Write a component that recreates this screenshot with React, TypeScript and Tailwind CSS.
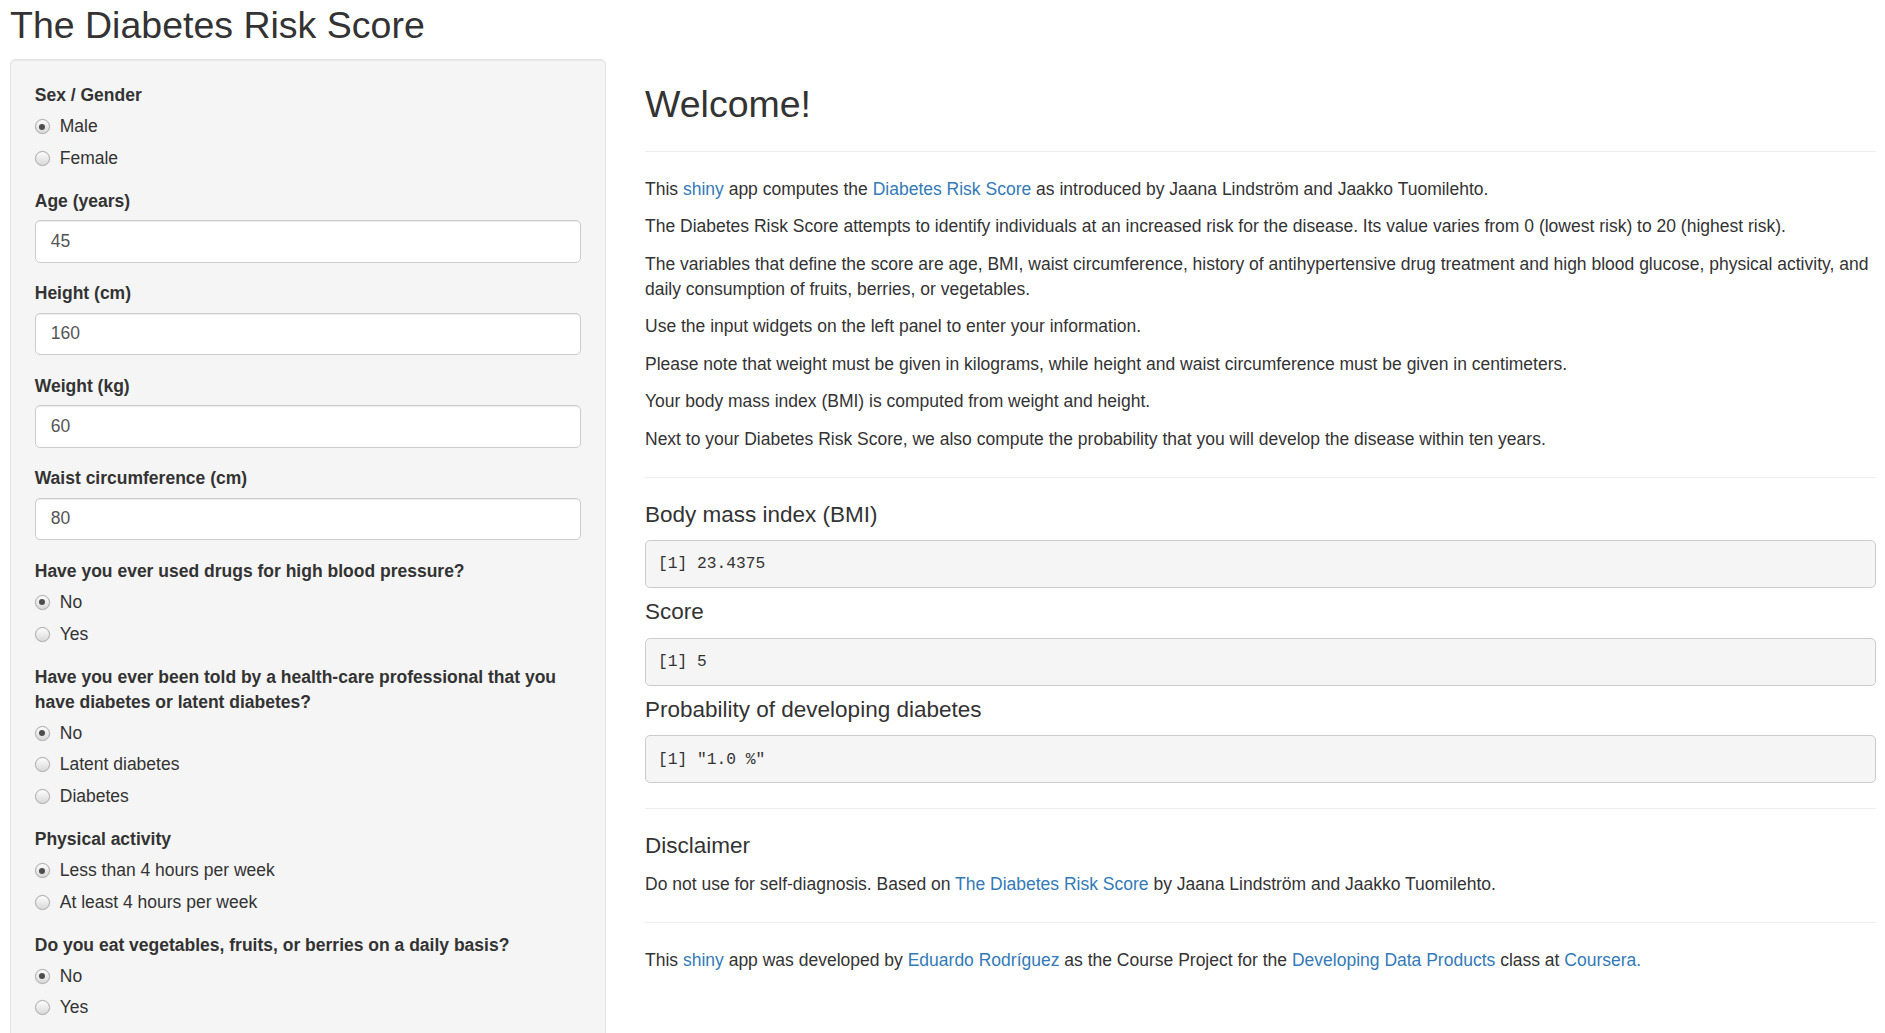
import React from 'react';

const linkCls = 'text-[#337ab7] no-underline';

interface RadioGroupProps {
  label: string;
  options: string[];
  selected: number;
}

function RadioOption({ label, checked }: { label: string; checked: boolean }) {
  return (
    <div className="flex items-center h-[25px]">
      <span className="flex items-center justify-center w-[15px] h-[15px] rounded-full border border-[#a9a9a9] bg-linear-to-b from-[#fdfdfd] to-[#d9d9d9] shadow-[0_0_0_0.5px_rgba(0,0,0,0.05)]">
        {checked && <span className="w-[6px] h-[6px] rounded-full bg-[#4d4d4d]" />}
      </span>
      <span className="ml-[10px]">{label}</span>
    </div>
  );
}

function RadioGroup({ label, options, selected }: RadioGroupProps) {
  return (
    <div className="mb-[18px]">
      <label className="block font-bold leading-[25px] mb-[6px]">{label}</label>
      <div className="flex flex-col gap-[6.7px]">
        {options.map((o, i) => (
          <RadioOption key={o} label={o} checked={i === selected} />
        ))}
      </div>
    </div>
  );
}

function NumberInput({ label, value }: { label: string; value: string }) {
  return (
    <div className="mb-[18.75px]">
      <label className="block font-bold leading-[25px] mb-[6.25px]">{label}</label>
      <input
        type="text"
        readOnly
        value={value}
        className="block w-full h-[42.5px] px-[15px] rounded-[5px] border border-[#ccc] bg-white text-[#555] text-[17.5px] shadow-[inset_0_1px_1px_rgba(0,0,0,0.075)] outline-none"
      />
    </div>
  );
}

function Output({ title, value }: { title: string; value: string }) {
  return (
    <>
      <h4 className="text-[22.5px] leading-[24.75px] mt-[12.5px] mb-[12.5px] font-normal">{title}</h4>
      <pre className="mb-[12.5px] px-[12px] py-[11.5px] bg-[#f5f5f5] border border-[#ccc] rounded-[5px] text-[16.25px] leading-[23px] text-[#333] font-['Liberation_Mono',monospace]">
        {value}
      </pre>
    </>
  );
}

export default function App() {
  return (
    <div className="h-screen overflow-hidden bg-white text-[#333] text-[17.5px] leading-[25px] font-['Liberation_Sans',Arial,sans-serif] pl-[10px] pr-[9px]">
      <h2 className="pt-[5px] mb-[13px] text-[37.5px] leading-[41.25px] font-normal">The Diabetes Risk Score</h2>

      <div className="flex items-start">
        <div className="w-[596px] shrink-0 bg-[#f5f5f5] border border-[#e3e3e3] rounded-[5px] pt-[23px] px-[23.75px] pb-[23.75px] shadow-[inset_0_1px_1px_rgba(0,0,0,0.05)]">
          <RadioGroup label="Sex / Gender" options={['Male', 'Female']} selected={0} />
          <NumberInput label="Age (years)" value="45" />
          <NumberInput label="Height (cm)" value="160" />
          <NumberInput label="Weight (kg)" value="60" />
          <NumberInput label="Waist circumference (cm)" value="80" />
          <RadioGroup label="Have you ever used drugs for high blood pressure?" options={['No', 'Yes']} selected={0} />
          <RadioGroup
            label="Have you ever been told by a health-care professional that you have diabetes or latent diabetes?"
            options={['No', 'Latent diabetes', 'Diabetes']}
            selected={0}
          />
          <RadioGroup
            label="Physical activity"
            options={['Less than 4 hours per week', 'At least 4 hours per week']}
            selected={0}
          />
          <RadioGroup
            label="Do you eat vegetables, fruits, or berries on a daily basis?"
            options={['No', 'Yes']}
            selected={0}
          />
        </div>

        <div className="ml-[39px] flex-1 min-w-0">
          <h2 className="mt-[25px] mb-[12.5px] text-[37.5px] leading-[41.25px] font-normal">Welcome!</h2>
          <hr className="my-[25px] border-[#eee]" />
          <p className="mb-[12.5px]">
            This <a className={linkCls}>shiny</a> app computes the <a className={linkCls}>Diabetes Risk Score</a> as introduced by Jaana Lindström and Jaakko Tuomilehto.
          </p>
          <p className="mb-[12.5px]">
            The Diabetes Risk Score attempts to identify individuals at an increased risk for the disease. Its value varies from 0 (lowest risk) to 20 (highest risk).
          </p>
          <p className="mb-[12.5px]">
            The variables that define the score are age, BMI, waist circumference, history of antihypertensive drug treatment and high blood glucose, physical activity, and daily consumption of fruits, berries, or vegetables.
          </p>
          <p className="mb-[12.5px]">Use the input widgets on the left panel to enter your information.</p>
          <p className="mb-[12.5px]">
            Please note that weight must be given in kilograms, while height and waist circumference must be given in centimeters.
          </p>
          <p className="mb-[12.5px]">Your body mass index (BMI) is computed from weight and height.</p>
          <p className="mb-[12.5px]">
            Next to your Diabetes Risk Score, we also compute the probability that you will develop the disease within ten years.
          </p>
          <hr className="my-[25px] border-[#eee]" />

          <Output title="Body mass index (BMI)" value="[1] 23.4375" />
          <Output title="Score" value="[1] 5" />
          <Output title="Probability of developing diabetes" value={'[1] "1.0 %"'} />

          <hr className="my-[25px] border-[#eee]" />
          <h4 className="text-[22.5px] leading-[24.75px] mt-[12.5px] mb-[12.5px] font-normal">Disclaimer</h4>
          <p className="mb-[12.5px]">
            Do not use for self-diagnosis. Based on <a className={linkCls}>The Diabetes Risk Score</a> by Jaana Lindström and Jaakko Tuomilehto.
          </p>
          <hr className="my-[25px] border-[#eee]" />
          <p className="mb-[12.5px]">
            This <a className={linkCls}>shiny</a> app was developed by <a className={linkCls}>Eduardo Rodríguez</a> as the Course Project for the <a className={linkCls}>Developing Data Products</a> class at <a className={linkCls}>Coursera.</a>
          </p>
        </div>
      </div>
    </div>
  );
}
